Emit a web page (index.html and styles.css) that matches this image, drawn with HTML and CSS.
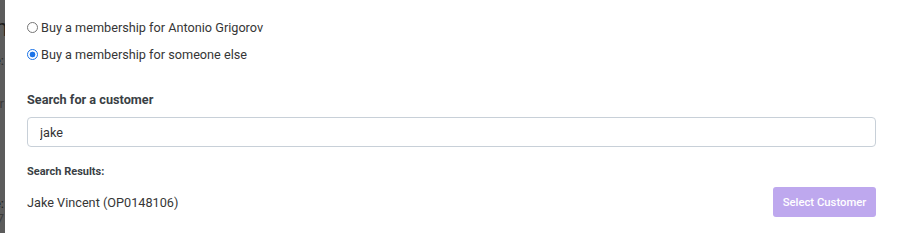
FILE: index.html
```html
<!DOCTYPE html>
<html lang="en">
<head>
<meta charset="utf-8">
<title>Buy a membership</title>
<link rel="stylesheet" href="styles.css">
</head>
<body>
<div class="screen">
  <div class="backdrop">
    <span class="frag frag-title">Hn</span>
    <span class="frag frag-colon">Name:</span>
    <span class="frag frag-r">Order</span>
    <span class="frag frag-e">Date:</span>
    <span class="frag frag-7">2017</span>
  </div>
  <div class="modal">
    <label class="choice">
      <input type="radio" name="who" class="radio">
      <span>Buy a membership for Antonio Grigorov</span>
    </label>
    <label class="choice">
      <input type="radio" name="who" class="radio" checked>
      <span>Buy a membership for someone else</span>
    </label>
    <div class="field-label">Search for a customer</div>
    <input class="search" type="text" value="jake">
    <div class="results-label">Search Results:</div>
    <div class="result-row">
      <span class="result-name">Jake Vincent (OP0148106)</span>
      <button class="select-btn" type="button">Select Customer</button>
    </div>
  </div>
</div>
</body>
</html>
```
FILE: styles.css
```css
* { box-sizing: border-box; }
html, body { margin: 0; padding: 0; background: #ffffff; }
body {
  font-family: Roboto, "Liberation Sans", Arial, sans-serif;
  color: #3a3a3a;
  width: 907px;
  height: 233px;
  overflow: hidden;
}
.screen {
  display: flex;
  height: 233px;
}
.backdrop {
  width: 5px;
  flex: none;
  background: #5c5c5c;
  overflow: hidden;
  display: flex;
  flex-direction: column;
  align-items: flex-end;
  color: #1e1e1e;
  font-family: Roboto, "Liberation Sans", sans-serif;
}
.frag { white-space: nowrap; display: block; }
.frag-title { font-size: 24px; line-height: 24px; margin-top: 16px; margin-right: -3px; }
.frag-colon { font-size: 13px; line-height: 14px; margin-top: 14px; margin-right: 1px; color: #2a2a2a; }
.frag-r { font-size: 13px; line-height: 14px; margin-top: 29px; margin-right: 1px; color: #3a3a3a; }
.frag-e { font-size: 13px; line-height: 14px; margin-top: 86px; margin-right: 1px; color: #1e1e1e; }
.frag-7 { font-size: 13px; line-height: 14px; margin-top: 1px; margin-right: 1px; color: #3c3c3c; }

.modal {
  flex: 1;
  background: #ffffff;
  padding: 17px 31px 0 22px;
  display: flex;
  flex-direction: column;
}
.choice {
  display: flex;
  align-items: center;
  height: 20px;
  margin-bottom: 7px;
  font-size: 12.7px;
  color: #363636;
  cursor: pointer;
}
.radio {
  appearance: none;
  -webkit-appearance: none;
  width: 11px;
  height: 11px;
  margin: 0 3px 0 0;
  border: 1px solid #767676;
  border-radius: 50%;
  background: #ffffff;
  flex: none;
}
.radio:checked {
  border: 1px solid #1a73e8;
  background: radial-gradient(circle, #1a73e8 0 2.6px, #ffffff 3.2px);
}
.field-label {
  margin-top: 19px;
  font-size: 12.7px;
  font-weight: 700;
  line-height: 20px;
  color: #3a3f45;
}
.search {
  margin-top: 7px;
  height: 30px;
  width: 100%;
  border: 1px solid #c8d0d8;
  border-radius: 4px;
  padding: 0 12px;
  font-family: inherit;
  font-size: 12.7px;
  color: #333333;
  outline: none;
}
.results-label {
  margin-top: 17px;
  font-size: 11px;
  font-weight: 700;
  line-height: 16px;
  color: #3a3f45;
}
.result-row {
  margin-top: 7px;
  display: flex;
  align-items: center;
  justify-content: space-between;
  height: 30px;
}
.result-name { font-size: 12.7px; color: #363636; }
.select-btn {
  width: 103px;
  height: 30px;
  border: none;
  border-radius: 3px;
  background: #bea8ee;
  color: #ffffff;
  font-family: inherit;
  font-size: 11.3px;
  font-weight: 500;
  padding: 0;
}
```
